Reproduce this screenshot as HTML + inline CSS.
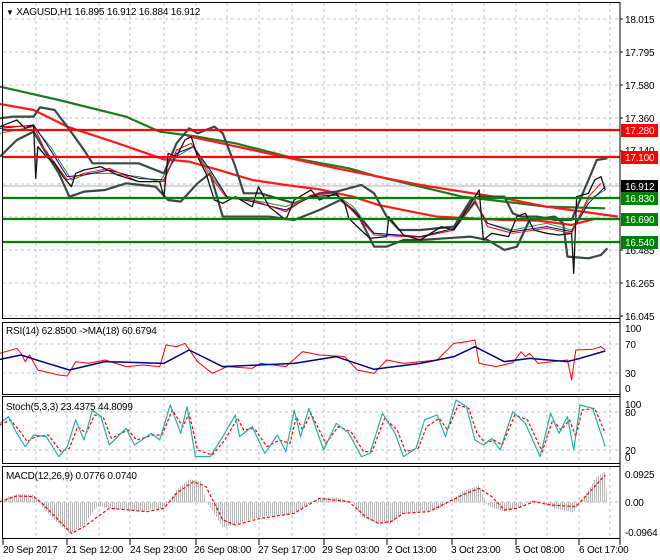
<!DOCTYPE html>
<html><head><meta charset="utf-8"><style>
body{margin:0;background:#fff;width:660px;height:560px;overflow:hidden}
svg{display:block}
text{font-family:"Liberation Sans",sans-serif;font-size:10px;fill:#000;letter-spacing:-0.2px}
.ns{vector-effect:non-scaling-stroke;fill:none;stroke-linejoin:round}
</style></head><body>
<svg width="660" height="560" viewBox="0 0 660 560" xmlns="http://www.w3.org/2000/svg">
<defs>
<pattern id="hb" width="4.758" height="30" patternUnits="userSpaceOnUse"><rect x="0" y="0" width="2.379" height="30" fill="#b4b4b4"/></pattern>
</defs>
<rect width="660" height="560" fill="#fff"/>
<g stroke="#c0c0c0" stroke-dasharray="3,3" stroke-width="1">
<path d="M36 3V318M67 3V318M99 3V318M130 3V318M164 3V318M196 3V318M227 3V318M259 3V318M292 3V318M324 3V318M356 3V318M387 3V318M419 3V318M452 3V318M484 3V318M516 3V318M547 3V318M579 3V318M610 3V318"/>
<path d="M36 323V394M67 323V394M99 323V394M130 323V394M164 323V394M196 323V394M227 323V394M259 323V394M292 323V394M324 323V394M356 323V394M387 323V394M419 323V394M452 323V394M484 323V394M516 323V394M547 323V394M579 323V394M610 323V394"/>
<path d="M36 397V463M67 397V463M99 397V463M130 397V463M164 397V463M196 397V463M227 397V463M259 397V463M292 397V463M324 397V463M356 397V463M387 397V463M419 397V463M452 397V463M484 397V463M516 397V463M547 397V463M579 397V463M610 397V463"/>
<path d="M36 467V538M67 467V538M99 467V538M130 467V538M164 467V538M196 467V538M227 467V538M259 467V538M292 467V538M324 467V538M356 467V538M387 467V538M419 467V538M452 467V538M484 467V538M516 467V538M547 467V538M579 467V538M610 467V538"/>
<path d="M3 19H620M3 52H620M3 85H620M3 118H620M3 151H620M3 184H620M3 217H620M3 250H620M3 283H620M3 316H620"/>
<path d="M3 344H620M3 373H620M3 412H620M3 450H620M3 502H620"/>
</g>
<line x1="3" y1="186" x2="620" y2="186" stroke="#b0b0b0" stroke-width="1"/>
<g transform="scale(0.4203,0.3333)">
<polyline class="ns" stroke="#1d7a1d" stroke-width="2.2" points="0,260 140,300 300,350 380,395 460,408 560,430 700,475 830,505 900,530 1000,560 1100,590 1200,605 1300,620 1440,625"/>
<polyline class="ns" stroke="#ff1a1a" stroke-width="2.2" points="0,312 80,330 160,380 280,430 390,478 450,485 520,510 600,540 680,555 760,568 840,590 900,615 980,635 1040,650 1120,655 1200,660 1280,662 1360,675 1420,655"/>
<polyline class="ns" stroke="#ff1a1a" stroke-width="2.2" points="445,408 600,450 800,505 1000,555 1200,595 1300,620 1470,650"/>
<polyline class="ns" stroke="#3a4848" stroke-width="2.2" points="0,355 30,350 80,350 95,322 130,330 160,380 200,450 220,490 260,490 330,490 370,510 390,520 420,430 450,385 470,400 510,380 530,400 560,500 580,580 620,580 700,610 760,580 800,575 860,555 890,580 920,650 950,690 1000,690 1080,680 1120,600 1140,590 1200,590 1220,640 1240,650 1280,650 1320,660 1360,660 1380,600 1420,480 1445,475"/>
<polyline class="ns" stroke="#3a4848" stroke-width="2.2" points="0,470 40,420 80,395 110,460 140,520 165,590 200,575 250,570 300,550 370,560 400,600 430,605 470,550 500,520 530,650 570,650 640,650 700,660 760,630 810,600 850,640 890,740 920,740 960,720 1000,720 1060,715 1120,710 1160,720 1200,750 1230,740 1260,660 1320,650 1340,670 1350,770 1400,775 1430,765 1445,745"/>
<polyline class="ns" stroke="#2f8f2f" stroke-width="1" points="0,400 80,380 120,440 170,540 210,520 260,520 330,530 380,545 420,470 460,440 500,520 540,590 600,600 680,620 740,590 800,585 840,620 890,700 1000,710 1080,690 1130,610 1160,670 1220,690 1300,670 1360,690 1400,600 1440,570"/>
<polyline class="ns" stroke="#00008b" stroke-width="1" points="0,385 80,375 110,430 160,530 200,525 260,510 330,535 390,540 420,460 460,440 500,510 540,590 600,605 680,630 740,590 800,585 840,630 890,700 1000,710 1080,685 1130,605 1160,670 1220,695 1300,680 1360,695 1400,610 1440,560"/>
<polyline class="ns" stroke="#ff0000" stroke-width="1" points="0,380 80,378 105,445 160,540 200,520 260,505 330,545 390,545 420,450 455,430 495,520 540,595 600,600 680,635 740,585 800,580 840,635 890,705 1000,712 1080,690 1130,600 1160,680 1220,700 1300,685 1360,700 1400,590 1430,550"/>
<polyline class="ns" stroke="#111" stroke-width="1.3" points="0,380 20,370 40,360 60,385 80,375 85,535 90,440 110,470 130,490 150,530 170,560 180,520 200,510 240,500 280,525 330,545 380,545 390,590 400,460 420,470 440,420 455,410 470,470 490,520 510,600 530,610 560,590 600,620 615,560 640,620 680,660 700,600 740,570 760,600 800,580 820,610 830,655 850,680 880,715 920,710 925,650 960,705 1000,720 1050,680 1080,690 1120,610 1140,570 1150,720 1170,700 1210,710 1230,650 1250,640 1270,690 1300,700 1330,705 1360,700 1365,820 1372,590 1400,580 1415,540 1430,530 1440,570"/>
</g>
<g stroke-width="2.2">
<line x1="3" y1="130" x2="620" y2="130" stroke="#ff0000"/>
<line x1="3" y1="157" x2="620" y2="157" stroke="#ff0000"/>
<line x1="3" y1="198" x2="620" y2="198" stroke="#008000"/>
<line x1="3" y1="219" x2="620" y2="219" stroke="#008000"/>
<line x1="3" y1="242" x2="620" y2="242" stroke="#008000"/>
</g>
<g transform="translate(0,320) scale(0.4203,0.3333)">
<polyline class="ns" stroke="#ff0000" stroke-width="1" points="0,100 40,85 50,100 60,125 70,105 90,150 140,165 160,168 180,125 210,130 250,120 300,140 340,135 380,140 395,75 420,80 440,70 470,125 505,160 540,140 600,145 620,130 680,140 720,95 760,105 820,110 850,150 890,160 920,120 960,130 1040,120 1080,70 1110,65 1130,60 1140,130 1180,140 1220,128 1240,95 1250,110 1260,100 1280,130 1350,120 1360,180 1370,90 1410,88 1430,80 1440,90"/>
<polyline class="ns" stroke="#000080" stroke-width="1.5" points="0,118 50,105 100,125 165,150 250,125 390,130 450,90 530,140 700,130 800,110 890,148 1000,130 1080,110 1130,80 1200,125 1260,115 1350,125 1380,115 1440,93"/>
</g>
<g transform="translate(0,320) scale(0.4203,0.3333)">
<polyline class="ns" stroke="#ff0000" stroke-width="1.2" stroke-dasharray="3,2" points="0,315 25,300 45,330 65,365 85,350 115,345 145,395 165,385 185,320 205,340 225,285 245,290 265,355 305,330 325,360 365,345 385,345 410,270 435,320 450,280 470,390 505,405 535,360 565,295 580,330 605,325 635,380 665,360 690,370 705,290 720,330 740,280 775,370 805,320 835,335 865,395 885,395 915,295 945,330 965,395 995,385 1015,320 1045,295 1065,330 1090,255 1115,265 1135,340 1155,370 1175,360 1195,375 1225,285 1255,300 1290,395 1315,300 1335,330 1355,300 1370,350 1385,270 1415,265 1440,340"/>
<polyline class="ns" stroke="#20b2aa" stroke-width="1.2" points="0,310 20,290 40,340 60,380 80,345 110,350 140,410 160,380 180,300 200,360 220,270 240,290 260,375 300,325 320,375 360,340 380,360 405,255 430,340 445,260 465,410 500,410 530,350 560,285 570,350 600,320 630,400 660,345 680,395 700,270 715,350 735,265 770,390 800,310 830,340 860,410 880,400 910,280 940,340 960,410 990,385 1010,300 1040,285 1060,350 1085,240 1110,260 1130,360 1150,375 1170,355 1190,390 1220,275 1250,310 1285,410 1310,280 1330,340 1350,290 1365,390 1380,255 1410,265 1440,380"/>
</g>
<g transform="translate(0,320) scale(0.4203,0.3333)">
<polygon fill="url(#hb)" points="0,547 20,530 50,522 80,524 95,547 100,560 130,600 165,640 200,615 230,560 280,567 340,572 390,565 400,547 420,510 450,478 480,485 490,547 500,560 530,622 555,615 620,590 700,580 740,547 760,535 800,532 840,547 860,590 900,612 930,610 960,580 1040,570 1070,547 1100,515 1140,495 1155,547 1165,560 1200,575 1240,560 1250,547 1270,540 1290,547 1320,565 1365,578 1380,547 1400,510 1420,470 1440,455 1445,547"/>
<polyline class="ns" stroke="#ff0000" stroke-width="1.2" stroke-dasharray="3,2" points="0,545 40,528 80,530 100,550 170,640 200,620 260,565 350,575 390,565 420,520 460,485 490,500 530,600 560,615 620,595 700,580 760,535 830,545 870,590 900,610 930,605 960,580 1020,575 1060,550 1100,525 1140,505 1170,530 1200,570 1230,565 1270,545 1310,555 1370,560 1400,520 1440,465"/>
</g>
<g fill="none" stroke="#000" stroke-width="1">
<rect x="2.5" y="2.5" width="617.5" height="316"/>
<rect x="2.5" y="322.5" width="617.5" height="72"/>
<rect x="2.5" y="396.5" width="617.5" height="67"/>
<rect x="2.5" y="466.5" width="617.5" height="72"/>
<path d="M620 2V545M620 19h3M620 52h3M620 85h3M620 118h3M620 151h3M620 250h3M620 283h3M620 316h3M3 539v6M67 539v6M130 539v6M196 539v6M259 539v6M324 539v6M387 539v6M452 539v6M516 539v6M579 539v6"/>
</g>
<text x="6" y="15"><tspan font-size="8">▼</tspan> XAGUSD,H1  16.895 16.912 16.884 16.912</text>
<text x="625" y="23">18.015</text>
<text x="625" y="56">17.795</text>
<text x="625" y="89">17.580</text>
<text x="625" y="122">17.360</text>
<text x="625" y="154">17.140</text>
<text x="625" y="254">16.485</text>
<text x="625" y="287">16.265</text>
<text x="625" y="320">16.045</text>
<rect x="621" y="124" width="37" height="13" fill="#ff0000"/><text x="625" y="134" style="fill:#fff">17.280</text>
<rect x="621" y="151" width="37" height="13" fill="#ff0000"/><text x="625" y="161" style="fill:#fff">17.100</text>
<rect x="621" y="180" width="37" height="13" fill="#000"/><text x="625" y="190" style="fill:#fff">16.912</text>
<rect x="621" y="192" width="37" height="13" fill="#008000"/><text x="625" y="202" style="fill:#fff">16.830</text>
<rect x="621" y="213" width="37" height="13" fill="#008000"/><text x="625" y="223" style="fill:#fff">16.690</text>
<rect x="621" y="236" width="37" height="13" fill="#008000"/><text x="625" y="246" style="fill:#fff">16.540</text>
<text x="6" y="334">RSI(14) 62.8500  -&gt;MA(18) 60.6794</text>
<text x="625" y="332">100</text><text x="625" y="348">70</text><text x="625" y="377">30</text><text x="625" y="392">0</text>
<text x="6" y="410">Stoch(5,3,3) 23.4375 44.8099</text>
<text x="625" y="408">100</text><text x="625" y="416">80</text><text x="625" y="454">20</text><text x="625" y="461">0</text>
<text x="6" y="479">MACD(12,26,9) 0.0776 0.0740</text>
<text x="625" y="478">0.0925</text><text x="625" y="506">0.00</text><text x="625" y="536">-0.0964</text>
<text x="3" y="553">20 Sep 2017</text>
<text x="66" y="553">21 Sep 12:00</text>
<text x="130" y="553">24 Sep 23:00</text>
<text x="194" y="553">26 Sep 08:00</text>
<text x="258" y="553">27 Sep 17:00</text>
<text x="322" y="553">29 Sep 03:00</text>
<text x="387" y="553">2 Oct 13:00</text>
<text x="451" y="553">3 Oct 23:00</text>
<text x="515" y="553">5 Oct 08:00</text>
<text x="579" y="553">6 Oct 17:00</text>
</svg>
</body></html>
